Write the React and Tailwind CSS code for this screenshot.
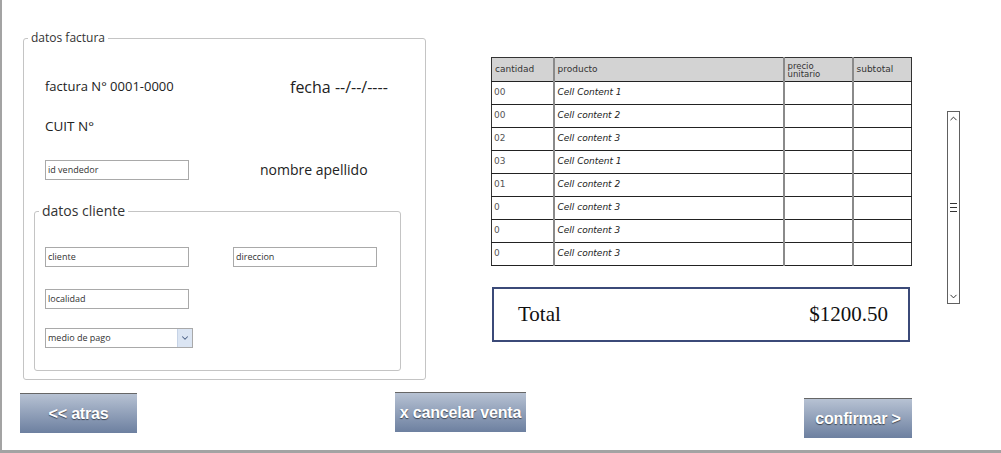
import { ChevronDown, ChevronUp } from "lucide-react";

const rows = [
  ["00", "Cell Content 1"],
  ["00", "Cell content 2"],
  ["02", "Cell content 3"],
  ["03", "Cell Content 1"],
  ["01", "Cell content 2"],
  ["0", "Cell content 3"],
  ["0", "Cell content 3"],
  ["0", "Cell content 3"],
];

const ui = { fontFamily: '"Open Sans", "Noto Sans", sans-serif' };
const sketch = { fontFamily: '"DejaVu Sans", sans-serif' };

function Field({ label, className = "" }) {
  return (
    <div
      className={`h-[20px] border border-[#a9a9a9] bg-white flex items-center pl-[2px] text-[9px] text-[#333] ${className}`}
      style={ui}
    >
      {label}
    </div>
  );
}

function NavButton({ children, className = "" }) {
  return (
    <button
      className={`h-[40px] border-t border-[#666] bg-gradient-to-b from-[#b7c2d3] to-[#6d80a0] text-white font-bold text-[16px] tracking-[-0.2px] [text-shadow:0_1px_1px_rgba(0,0,0,0.55)] ${className}`}
      style={{ fontFamily: '"Liberation Sans", Arial, sans-serif' }}
    >
      {children}
    </button>
  );
}

export default function App() {
  return (
    <div className="w-[1001px] h-[453px] bg-white border-l-2 border-b-[3px] border-[#a3a3a3] flex flex-col text-[#222]">
      {/* Top area */}
      <div className="flex pt-[30px] pl-[21px]">
        {/* datos factura */}
        <fieldset className="w-[403px] h-[350px] border border-[#c4c4c4] rounded-[3px] shrink-0" style={ui}>
          <legend className="ml-[4px] px-[3px] text-[12px] leading-[16px] text-[#333]">datos factura</legend>

          <div className="flex items-center mt-[31px] pl-[21px] h-[20px]">
            <span className="w-[245px] text-[13px]">factura N° 0001-0000</span>
            <span className="text-[16px]">fecha --/--/----</span>
          </div>

          <div className="mt-[19px] pl-[21px] h-[20px] flex items-center text-[13.5px]">CUIT N°</div>

          <div className="mt-[23px] pl-[21px] flex items-center">
            <Field label="id vendedor" className="w-[144px]" />
            <span className="ml-[71px] text-[14px]">nombre apellido</span>
          </div>

          {/* datos cliente */}
          <fieldset className="mt-[21px] ml-[10px] w-[367px] h-[170px] border border-[#c4c4c4] rounded-[3px]">
            <legend className="ml-[4px] px-[3px] text-[14px] leading-[20px] text-[#333]">datos cliente</legend>
            <div className="flex mt-[26px] pl-[10px]">
              <Field label="cliente" className="w-[144px]" />
              <Field label="direccion" className="w-[144px] ml-[44px]" />
            </div>
            <div className="mt-[22px] pl-[10px]">
              <Field label="localidad" className="w-[144px]" />
            </div>
            <div className="mt-[19px] pl-[10px]">
              <div className="w-[148px] h-[20px] border border-[#a9a9a9] flex items-center text-[9px] text-[#333]">
                <span className="pl-[2px] flex-1">medio de pago</span>
                <span className="w-[15px] h-[18px] bg-[#dbe5f3] border-l border-[#c6d3e6] flex items-center justify-center">
                  <ChevronDown size={10} strokeWidth={2.5} className="text-[#4a5f85]" />
                </span>
              </div>
            </div>
          </fieldset>
        </fieldset>

        {/* Right column */}
        <div className="ml-[65px] pt-[27px] w-[420px] shrink-0">
          <table className="w-[420px] border-collapse border border-[#333] table-fixed" style={sketch}>
            <colgroup>
              <col className="w-[62px]" />
              <col className="w-[230px]" />
              <col className="w-[69px]" />
              <col className="w-[59px]" />
            </colgroup>
            <thead>
              <tr className="h-[24px] bg-[#d3d3d3] text-[9px] text-[#333]">
                <th className="font-normal text-left pl-[3px] border-r-2 border-[#8a8a8a] border-b border-b-[#222]">cantidad</th>
                <th className="font-normal text-left pl-[3px] border-r-2 border-[#8a8a8a] border-b border-b-[#222]">producto</th>
                <th className="font-normal text-left pl-[3px] leading-[8px] text-[8.5px] border-r-2 border-[#8a8a8a] border-b border-b-[#222]">
                  precio
                  <br />
                  unitario
                </th>
                <th className="font-normal text-left pl-[3px] border-b border-b-[#222]">subtotal</th>
              </tr>
            </thead>
            <tbody>
              {rows.map(([qty, name], i) => (
                <tr key={i} className="h-[23px] border-b border-[#222] text-[9px]">
                  <td className="pl-[2px] text-[#555] border-r-2 border-[#8a8a8a]">{qty}</td>
                  <td className="pl-[3px] italic text-[#222] border-r-2 border-[#8a8a8a]">{name}</td>
                  <td className="border-r-2 border-[#8a8a8a]" />
                  <td />
                </tr>
              ))}
            </tbody>
          </table>

          <div
            className="mt-[21px] ml-[1px] w-[418px] h-[55px] border-2 border-[#3b4a78] flex items-center justify-between pl-[24px] pr-[20px] text-[21px] text-[#111]"
            style={{ fontFamily: '"Liberation Serif", "Times New Roman", serif' }}
          >
            <span>Total</span>
            <span>$1200.50</span>
          </div>
        </div>

        {/* Scrollbar */}
        <div className="ml-[36px] mt-[81px] w-[13px] h-[193px] border border-[#606060] flex flex-col items-center justify-between bg-white shrink-0">
          <ChevronUp size={11} strokeWidth={2} className="text-[#222] mt-[1px]" />
          <div className="flex flex-col gap-[3px]">
            <div className="w-[7px] h-px bg-[#333]" />
            <div className="w-[7px] h-px bg-[#333]" />
            <div className="w-[7px] h-px bg-[#333]" />
          </div>
          <ChevronDown size={11} strokeWidth={2} className="text-[#222] mb-[1px]" />
        </div>
      </div>

      {/* Bottom buttons */}
      <div className="flex items-start mt-[12px] pl-[18px]">
        <NavButton className="w-[117px] h-[39px] mt-[1px]">&lt;&lt; atras</NavButton>
        <NavButton className="w-[131px] ml-[258px]">x cancelar venta</NavButton>
        <NavButton className="w-[108px] ml-[278px] mt-[6px]">confirmar &gt;</NavButton>
      </div>
    </div>
  );
}
